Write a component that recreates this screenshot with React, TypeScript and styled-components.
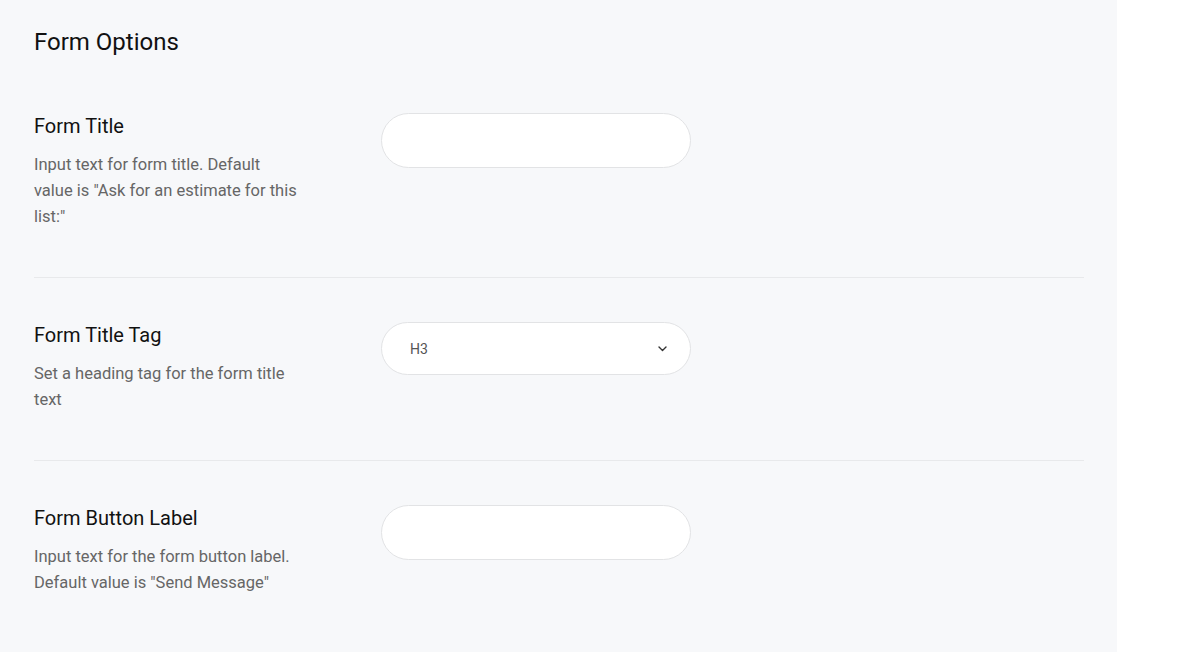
import React from "react";
import styled, { createGlobalStyle } from "styled-components";

const GlobalStyle = createGlobalStyle`
  html, body { margin: 0; padding: 0; background: #ffffff; }
  body { font-family: Roboto, "Noto Sans", "Liberation Sans", sans-serif; -webkit-font-smoothing: antialiased; }
  * { box-sizing: border-box; }
`;

const Page = styled.div`
  display: flex;
  min-height: 652px;
`;

const Panel = styled.section`
  width: 1117px;
  min-height: 652px;
  background: #f7f8fa;
  padding: 24px 33px 0 34px;
`;

const Heading = styled.h2`
  margin: 0;
  font-size: 24px;
  line-height: 36px;
  font-weight: 400;
  color: #111111;
`;

const Rows = styled.div`
  margin-top: 9px;
  display: flex;
  flex-direction: column;
`;

const Row = styled.div<{ $last?: boolean }>`
  display: grid;
  grid-template-columns: 347px 310px;
  align-items: start;
  padding: 44px 0 47px;
  border-bottom: ${(p) => (p.$last ? "none" : "1px solid #e8e9eb")};
`;

const LabelCol = styled.div`
  display: flex;
  flex-direction: column;
`;

const Label = styled.div`
  font-size: 20px;
  line-height: 26px;
  color: #111111;
`;

const Desc = styled.div`
  margin-top: 13px;
  max-width: 268px;
  font-size: 16.5px;
  line-height: 26px;
  color: #666666;
`;

const TextInput = styled.input<{ $h: number }>`
  display: block;
  width: 310px;
  height: ${(p) => p.$h}px;
  margin: 0;
  border: 1px solid #e2e3e5;
  border-radius: 999px;
  background: #ffffff;
  outline: none;
  padding: 0 28px;
  font-family: inherit;
  font-size: 14px;
`;

const SelectBox = styled.div`
  display: flex;
  align-items: center;
  justify-content: space-between;
  width: 310px;
  height: 53px;
  border: 1px solid #e2e3e5;
  border-radius: 999px;
  background: #ffffff;
  padding: 0 23px 0 28px;
  font-size: 14px;
  color: #555555;
`;

const Chevron = () => (
  <svg width="9" height="6" viewBox="0 0 9 6" fill="none">
    <path d="M1 1l3.5 3.5L8 1" stroke="#333" strokeWidth="1.4" strokeLinecap="round" strokeLinejoin="round" />
  </svg>
);

export default function App() {
  return (
    <>
      <GlobalStyle />
      <Page>
        <Panel>
          <Heading>Form Options</Heading>
          <Rows>
            <Row>
              <LabelCol>
                <Label>Form Title</Label>
                <Desc>Input text for form title. Default value is "Ask for an estimate for this list:"</Desc>
              </LabelCol>
              <TextInput $h={55} type="text" />
            </Row>
            <Row>
              <LabelCol>
                <Label>Form Title Tag</Label>
                <Desc>Set a heading tag for the form title text</Desc>
              </LabelCol>
              <SelectBox>
                <span>H3</span>
                <Chevron />
              </SelectBox>
            </Row>
            <Row $last>
              <LabelCol>
                <Label>Form Button Label</Label>
                <Desc>Input text for the form button label. Default value is "Send Message"</Desc>
              </LabelCol>
              <TextInput $h={55} type="text" />
            </Row>
          </Rows>
        </Panel>
      </Page>
    </>
  );
}
